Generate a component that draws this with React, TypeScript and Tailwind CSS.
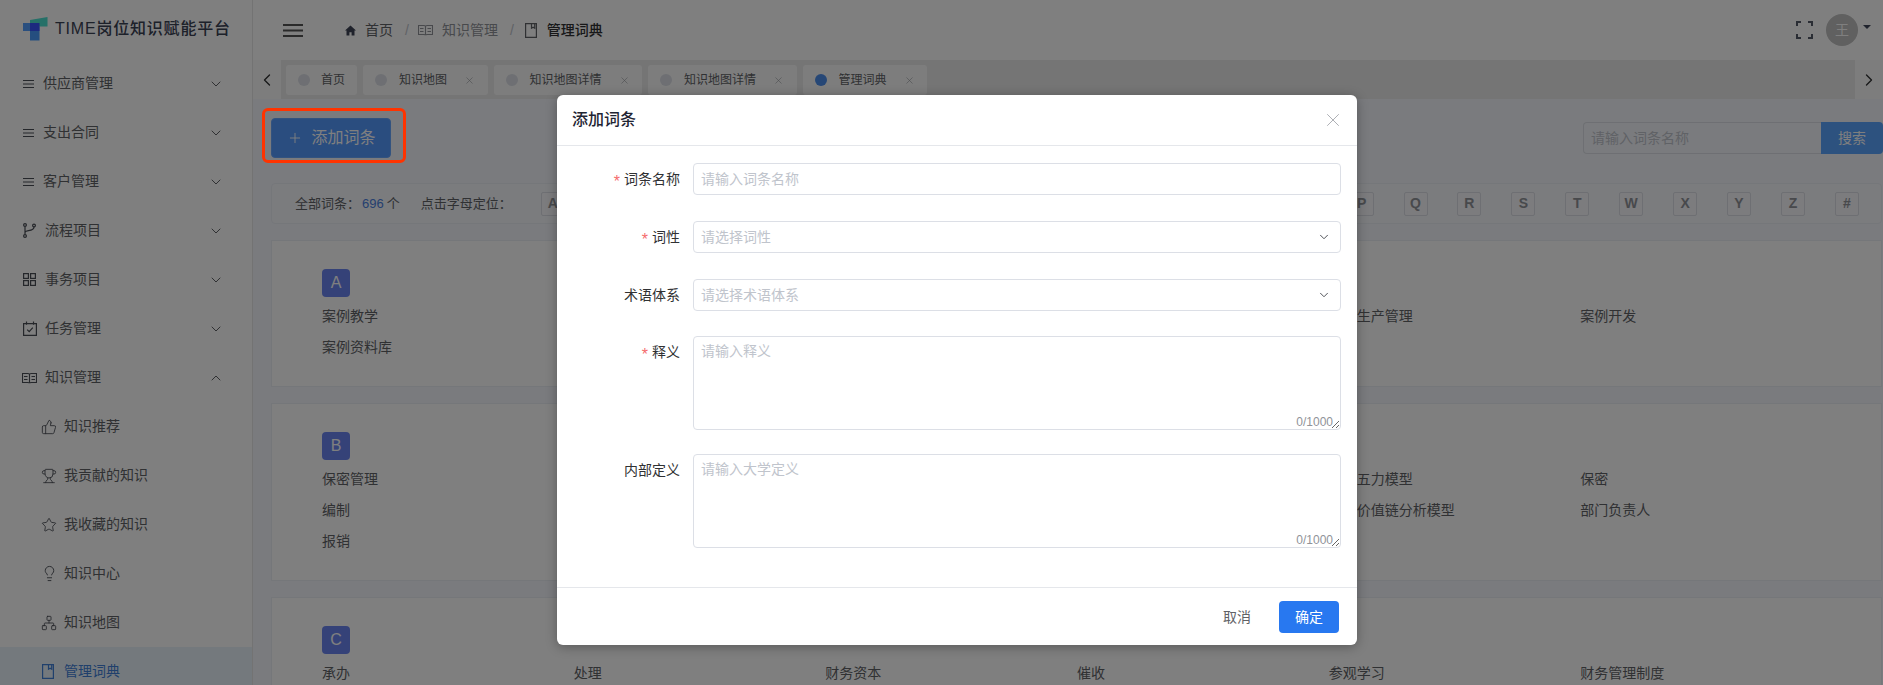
import React from "react";
import { ChevronDown, ChevronUp, ChevronLeft, ChevronRight, X, Plus, ThumbsUp, Trophy, Star, Lightbulb, Network } from "lucide-react";

const Lines = () => (
  <svg width="11" height="10" viewBox="0 0 11 10" fill="none" stroke="currentColor" strokeWidth="1.1"><path d="M0 1.5h11M0 5h11M0 8.5h11" /></svg>
);
const Fork = () => (
  <svg width="13" height="15" viewBox="0 0 13 15" fill="none" stroke="currentColor" strokeWidth="1.2"><circle cx="2" cy="2" r="1.4" /><circle cx="2" cy="13" r="1.4" /><circle cx="11" cy="2.5" r="1.4" /><path d="M2 3.4v8.2M2 9.5c0-2.5 9-1 9-5.6" /></svg>
);
const Grid = () => (
  <svg width="13" height="13" viewBox="0 0 13 13" fill="none" stroke="currentColor" strokeWidth="1.2"><rect x=".6" y=".6" width="4.8" height="4.8" /><rect x="7.6" y=".6" width="4.8" height="4.8" /><rect x=".6" y="7.6" width="4.8" height="4.8" /><rect x="7.6" y="7.6" width="4.8" height="4.8" /></svg>
);
const Cal = () => (
  <svg width="14" height="15" viewBox="0 0 14 15" fill="none" stroke="currentColor" strokeWidth="1.2"><path d="M.6 2.6h12.8v11.8H.6zM3.5.4v3.4M10.5.4v3.4M4.2 8.6l2 2 3.6-4" /></svg>
);
const OpenBook = () => (
  <svg width="15" height="12" viewBox="0 0 15 12" fill="none" stroke="currentColor" strokeWidth="1.1"><path d="M.5 1.5h5.5c.8 0 1.5.5 1.5 1.2 0-.7.7-1.2 1.5-1.2h5.5v9H9.5c-.9 0-2 .3-2 .8 0-.5-1.1-.8-2-.8h-5zM7.5 2.7v8.2M2 4.5h3.5M2 7.5h3.5M9.5 4.5H13M9.5 7.5H13" /></svg>
);
const Dict = () => (
  <svg width="12" height="15" viewBox="0 0 12 15" fill="none" stroke="currentColor" strokeWidth="1.2"><path d="M.6.6h10.8v13.8H.6zM6.5.6v4.6l1.6-1 1.6 1V.6" /></svg>
);
const Home = () => (
  <svg width="11" height="11" viewBox="0 0 11 11" fill="currentColor"><path d="M5.5.5 11 5.6H9.5V10.5H6.6V7.3H4.4V10.5H1.5V5.6H0z" /></svg>
);
const Fullscreen = () => (
  <svg width="17" height="18" viewBox="0 0 17 18" fill="none" stroke="currentColor" strokeWidth="2"><path d="M1 5V1h4M12 1h4v4M16 13v4h-4M5 17H1v-4" /></svg>
);

const sideTop = [
  { label: "供应商管理", icon: <Lines />, w: "w-[20px]" },
  { label: "支出合同", icon: <Lines />, w: "w-[20px]" },
  { label: "客户管理", icon: <Lines />, w: "w-[20px]" },
  { label: "流程项目", icon: <Fork />, w: "w-[22px]" },
  { label: "事务项目", icon: <Grid />, w: "w-[22px]" },
  { label: "任务管理", icon: <Cal />, w: "w-[22px]" },
];
const sideSub = [
  { label: "知识推荐", icon: <ThumbsUp size={16} strokeWidth={1.3} /> },
  { label: "我贡献的知识", icon: <Trophy size={16} strokeWidth={1.3} /> },
  { label: "我收藏的知识", icon: <Star size={16} strokeWidth={1.3} /> },
  { label: "知识中心", icon: <Lightbulb size={17} strokeWidth={1.3} /> },
  { label: "知识地图", icon: <Network size={16} strokeWidth={1.3} /> },
];

const tabs = [
  { label: "首页", close: false, on: false },
  { label: "知识地图", close: true, on: false },
  { label: "知识地图详情", close: true, on: false },
  { label: "知识地图详情", close: true, on: false },
  { label: "管理词典", close: true, on: true },
];

const letters = ["A","B","C","D","E","F","G","H","I","J","K","L","M","N","O","P","Q","R","S","T","W","X","Y","Z","#"];

const cards = [
  { letter: "A", rows: [["案例教学", "", "", "", "安全生产管理", "案例开发"], ["案例资料库", "", "", "", "", ""]] },
  { letter: "B", rows: [["保密管理", "", "", "", "波特五力模型", "保密"], ["编制", "", "", "", "波特价值链分析模型", "部门负责人"], ["报销", "", "", "", "", ""]] },
  { letter: "C", rows: [["承办", "处理", "财务资本", "催收", "参观学习", "财务管理制度"]] },
];

const inputCls = "w-full h-[32px] border border-[#dcdfe6] rounded-[4px] pl-[7px] pr-2 text-[14px] text-[#606266] outline-none bg-white placeholder:text-[#c0c4cc]";

function Label({ text, req }: { text: string; req?: boolean }) {
  return (
    <label className="w-[123px] mr-[13px] shrink-0 text-right text-[14px] leading-[32px] text-[#303133]">
      {req && <span className="text-[#f56c6c] text-[16px] mr-[4px] align-[-3px] leading-none">*</span>}
      {text}
    </label>
  );
}

function Area({ ph }: { ph: string }) {
  return (
    <div className="relative w-[648px]">
      <textarea placeholder={ph} className="block w-full h-[94px] border border-[#dcdfe6] rounded-[4px] pl-[7px] pr-2 py-[4px] text-[14px] leading-[20px] outline-none placeholder:text-[#c0c4cc]" />
      <span className="absolute right-[8px] bottom-0 text-[12px] leading-[16px] text-[#909399]">0/1000</span>
    </div>
  );
}

export default function App() {
  return (
    <div className="relative w-full h-[685px] overflow-hidden flex bg-[#f5f7fd] font-['Liberation_Sans','Noto_Sans_CJK_SC',sans-serif]">
      <aside className="w-[253px] shrink-0 h-full bg-white border-r border-[#e6e6e6] overflow-hidden">
        <div className="h-[59px] flex items-center pl-[23px] pb-[1px]">
          <svg width="25" height="24" viewBox="0 0 25 24">
            <path d="M7 3 24.5 0v9.5H7z" fill="#4de0d0" />
            <path d="M0 6h16v8H0z" fill="#549eff" />
            <path d="M7 9.5h9.5V23.5H7z" fill="#4a9cff" />
            <path d="M7 6h9.5v8H7z" fill="#3854ff" />
          </svg>
          <span className="ml-[7px] text-[16px] font-medium text-[#3a4254] tracking-[0.8px] whitespace-nowrap">TIME岗位知识赋能平台</span>
        </div>
        <nav className="text-[14px] text-[#606266]">
          {sideTop.map((s) => (
            <div key={s.label} className="h-[49px] flex items-center pl-[23px] pr-[28px]">
              <span className={`${s.w} shrink-0 flex items-center text-[#4a4e56]`}>{s.icon}</span>
              <span className="flex-1">{s.label}</span>
              <ChevronDown size={16} strokeWidth={1.5} />
            </div>
          ))}
          <div className="h-[49px] flex items-center pl-[22px] pr-[28px]">
            <span className="w-[23px] shrink-0 flex items-center text-[#4a4e56]"><OpenBook /></span>
            <span className="flex-1">知识管理</span>
            <ChevronUp size={16} strokeWidth={1.5} />
          </div>
          {sideSub.map((s) => (
            <div key={s.label} className="h-[49px] flex items-center pl-[41px]">
              <span className="w-[23px] shrink-0 flex items-center text-[#4a4e56]">{s.icon}</span>
              <span>{s.label}</span>
            </div>
          ))}
          <div className="h-[49px] flex items-center pl-[42px] bg-[#e8f3fb] text-[#4080d8]">
            <span className="w-[22px] shrink-0 flex items-center"><Dict /></span>
            <span>管理词典</span>
          </div>
        </nav>
      </aside>

      <main className="flex-1 min-w-0 flex flex-col">
        <header className="h-[60px] shrink-0 bg-white flex items-center pl-[30px] pr-[12px] text-[14px]">
          <svg width="20" height="13" viewBox="0 0 20 13" fill="#555"><path d="M0 0h20v2H0zM0 5.5h20v2H0zM0 11h20v2H0z" /></svg>
          <span className="ml-[42px] text-[#3f4556]"><Home /></span>
          <span className="ml-[9px] text-[#606266]">首页</span>
          <span className="ml-[12px] text-[#c0c4cc]">/</span>
          <span className="ml-[9px] text-[#909399]"><OpenBook /></span>
          <span className="ml-[9px] text-[#909399]">知识管理</span>
          <span className="ml-[12px] text-[#c0c4cc]">/</span>
          <span className="ml-[11px] text-[#606266]"><Dict /></span>
          <span className="ml-[10px] text-[#303133] font-medium">管理词典</span>
          <span className="ml-auto text-[#555a68] flex"><Fullscreen /></span>
          <span className="ml-[13px] w-[32px] h-[32px] rounded-full bg-[#c0c0c0] text-white flex items-center justify-center">王</span>
          <span className="ml-[5px] mb-[6px] w-0 h-0 border-x-[4px] border-x-transparent border-t-[4px] border-t-[#40465a]" />
        </header>

        <div className="h-[39px] shrink-0 flex bg-[#ebebeb] text-[12px] text-[#606266]">
          <div className="w-[28px] bg-[#fafafa] flex items-center justify-center text-[#303133]"><ChevronLeft size={20} strokeWidth={1.6} /></div>
          <div className="flex-1 flex gap-[6px] pl-[5px] pt-[5px]">
            {tabs.map((t, i) => (
              <div key={i} className={`h-[30px] bg-[#fbfbfb] rounded-[3px] flex items-center pl-[12px] ${t.close ? "pr-[12.5px]" : "pr-[12px]"}`}>
                <span className={`w-[12px] h-[12px] rounded-full ${t.on ? "bg-[#4d8eec]" : "bg-[#dcdfe6]"}`} />
                <span className={t.close ? "ml-[12px]" : "ml-[11px]"}>{t.label}</span>
                {t.close && <X size={11} strokeWidth={1.2} className="ml-[17px] text-[#909399]" />}
              </div>
            ))}
          </div>
          <div className="w-[28px] bg-[#fafafa] flex items-center justify-center text-[#303133]"><ChevronRight size={20} strokeWidth={1.6} /></div>
        </div>

        <div className="flex-1 min-h-0 pl-[18px] pr-px pt-[19px]">
          <div className="flex items-center justify-between h-[40px]">
            <button className="w-[120px] h-[40px] rounded-[4px] bg-[#549aff] border border-[#66a6ff] text-white text-[16px] flex items-center pl-[14.5px]">
              <Plus size={16} strokeWidth={1.4} />
              <span className="ml-[9px]">添加词条</span>
            </button>
            <div className="flex h-[32px] -mr-px">
              <input placeholder="请输入词条名称" className="w-[238px] h-[32px] border border-[#dcdfe6] border-r-0 rounded-l-[4px] pl-[7px] pr-2 text-[14px] bg-transparent outline-none placeholder:text-[#c0c4cc]" />
              <button className="w-[62px] h-[32px] bg-[#5aa4ff] rounded-r-[4px] text-white text-[14px]">搜索</button>
            </div>
          </div>

          <div className="mt-[25px] h-[41px] border border-[#ebeef5] rounded-[4px] bg-[#f6f8fd] flex items-center pl-[23px] pr-[22px] text-[13px] text-[#606266]">
            <span>全部词条：</span>
            <span className="ml-[2px] text-[#4a80e0]">696</span>
            <span className="ml-[3px]">个</span>
            <span className="ml-[21px]">点击字母定位：</span>
            <div className="ml-[29px] flex-1 flex justify-between">
              {letters.map((l) => (
                <span key={l} className="w-[24px] h-[24px] rounded-[2px] border border-[#dcdfe6] bg-[#f8f8fc] flex items-center justify-center text-[14px] font-bold text-[#909399]">{l}</span>
              ))}
            </div>
          </div>

          <div className="mt-[16px] flex flex-col gap-[16px]">
            {cards.map((c) => (
              <section key={c.letter} className="border border-[#ebeef5] bg-white pt-[28px] pb-[23px] pl-[50px] pr-[49px] text-[14px] text-[#606266]">
                <div className="w-[28px] h-[28px] rounded-[4px] bg-[#6a85f0] text-white text-[16px] flex items-center justify-center mb-[4px]">{c.letter}</div>
                {c.rows.map((r, i) => (
                  <div key={i} className="grid grid-cols-6 h-[31px] items-center">
                    {r.map((w, j) => <div key={j}>{w}</div>)}
                  </div>
                ))}
              </section>
            ))}
          </div>
        </div>
      </main>

      <div className="absolute inset-0 bg-black/50">
        <div className="ml-[557px] mt-[95px] w-[800px] h-[550px] bg-white rounded-[6px] shadow-[0_2px_12px_rgba(0,0,0,0.3)]">
          <div className="h-[51px] px-[15px] flex items-center justify-between border-b border-[#e5e7eb]">
            <span className="text-[16px] font-medium text-[#1f2533]">添加词条</span>
            <X size={22} strokeWidth={0.8} className="-mr-[2px] text-[#909399]" />
          </div>
          <div className="h-[442px] pt-[17px] border-b border-[#e5e7eb]">
            <div className="flex mb-[26px]"><Label text="词条名称" req /><div className="w-[648px]"><input placeholder="请输入词条名称" className={inputCls} /></div></div>
            <div className="flex mb-[26px]"><Label text="词性" req />
              <div className="w-[648px] h-[32px] border border-[#dcdfe6] rounded-[4px] pl-[7px] pr-2 flex items-center justify-between text-[14px] text-[#c0c4cc]">请选择词性<ChevronDown size={14} strokeWidth={1.7} className="text-[#505258] mr-[1px]" /></div>
            </div>
            <div className="flex mb-[25px]"><Label text="术语体系" />
              <div className="w-[648px] h-[32px] border border-[#dcdfe6] rounded-[4px] pl-[7px] pr-2 flex items-center justify-between text-[14px] text-[#c0c4cc]">请选择术语体系<ChevronDown size={14} strokeWidth={1.7} className="text-[#505258] mr-[1px]" /></div>
            </div>
            <div className="flex mb-[24px]"><Label text="释义" req /><Area ph="请输入释义" /></div>
            <div className="flex"><Label text="内部定义" /><Area ph="请输入大学定义" /></div>
          </div>
          <div className="flex items-start justify-end h-[57px] pt-[13px] pr-[18px] gap-[12px] text-[14px]">
            <button className="w-[60px] h-[32px] text-[#606266]">取消</button>
            <button className="w-[60px] h-[32px] rounded-[4px] bg-[#2878f0] text-white">确定</button>
          </div>
        </div>
      </div>

      <div className="absolute left-[262px] top-[108px] w-[144px] h-[55px] border-[3px] border-[#ff3300] rounded-[6px]" />
    </div>
  );
}
